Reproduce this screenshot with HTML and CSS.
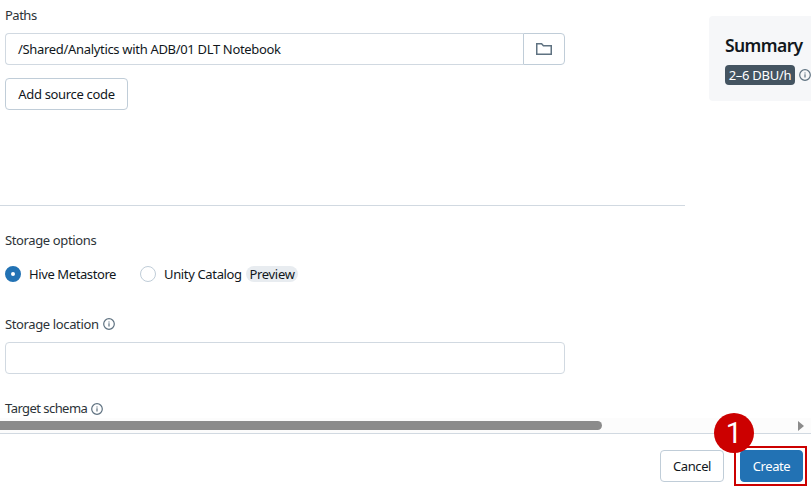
FILE: index.html
```html
<!DOCTYPE html>
<html lang="en">
<head>
<meta charset="utf-8">
<title>Create pipeline</title>
<link rel="stylesheet" href="styles.css">
</head>
<body>
<svg class="defs" width="0" height="0">
  <symbol id="info" viewBox="0 0 12 12"><circle cx="6" cy="6" r="5.3" fill="none" stroke="currentColor" stroke-width="1.2"/><path d="M6 5.2V8.6M6 3.4v1.2" stroke="currentColor" stroke-width="1.2"/></symbol>
</svg>
<div class="page">
  <main class="content">
    <form class="form">
      <section class="source">
        <div class="label paths-label"><span>Paths</span></div>
        <div class="path-row">
          <div class="path-input"><span class="path-text">/Shared/Analytics with ADB/01 DLT Notebook</span></div>
          <button class="browse" type="button" aria-label="Browse">
            <svg width="16" height="12" viewBox="0 0 16 12"><path d="M.75.75H5.6L7.4 2.75H15.25V11.25H.75Z" fill="none" stroke="#5f7281" stroke-width="1.5"/></svg>
          </button>
        </div>
        <button class="btn add" type="button"><span class="add-text">Add source code</span></button>
      </section>
      <section class="storage">
        <div class="label options"><span>Storage options</span></div>
        <div class="radios">
          <span class="radio checked"></span><span class="hive">Hive Metastore</span>
          <span class="radio second"></span><span class="unity">Unity Catalog</span>
          <span class="tag"><span>Preview</span></span>
        </div>
        <div class="label location"><span>Storage location</span><svg class="info"><use href="#info"/></svg></div>
        <div class="text-input"></div>
        <div class="label target"><span>Target schema</span><svg class="info"><use href="#info"/></svg></div>
      </section>
    </form>
    <aside class="summary">
      <h2><span>Summary</span></h2>
      <div class="rate"><span class="dbu"><span>2–6 DBU/h</span></span><svg class="info"><use href="#info"/></svg></div>
    </aside>
  </main>
  <div class="scrollbar"><div class="thumb"></div><svg width="6" height="10" viewBox="0 0 6 10"><path d="M0 0L6 5L0 10Z" fill="#8b8b8b"/></svg></div>
  <footer class="footer">
    <button class="btn cancel" type="button"><span>Cancel</span></button>
    <div class="highlight">
      <button class="btn create" type="button"><span>Create</span></button>
      <span class="step">1</span>
    </div>
  </footer>
</div>
</body>
</html>
```
FILE: styles.css
```css
* { box-sizing: border-box; }
body { margin: 0; background: #fff; color: #11171c; font: 13px/20px "Noto Sans", "Open Sans", sans-serif; overflow: hidden; }
button { font: inherit; color: inherit; padding: 0; }
span { white-space: nowrap; }
.defs { position: absolute; }
.page { width: 811px; height: 494px; display: flex; flex-direction: column; overflow: hidden; }
.content { height: 418px; display: flex; overflow: hidden; }
.form { width: 685px; flex: none; }
.source { height: 206px; padding: 5px 0 0 5px; border-bottom: 1px solid #d1d9e1; }
.label { height: 20px; display: flex; align-items: center; color: #2c3338; letter-spacing: -.37px; }
.paths-label { letter-spacing: -.5px; }
.path-row { width: 560px; height: 32px; margin-top: 8px; display: flex; }
.path-input { flex: 1; border: 1px solid #d1d9e1; border-right: 0; border-radius: 4px 0 0 4px; padding: 5px 12px; }
.path-text { letter-spacing: -.32px; }
.browse { width: 42px; border: 1px solid #c0cdd8; border-radius: 0 4px 4px 0; background: #fff; display: flex; align-items: center; justify-content: center; }
.btn { height: 32px; border: 1px solid #c0cdd8; border-radius: 4px; background: #fff; display: flex; align-items: center; justify-content: center; letter-spacing: -.4px; }
.add { width: 123px; margin-top: 13px; letter-spacing: -.32px; }
.storage { padding: 24px 0 0 5px; }
.radios { display: flex; align-items: center; height: 20px; margin-top: 14px; letter-spacing: -.3px; }
.radio { width: 16px; height: 16px; flex: none; border: 1px solid #c0cdd8; border-radius: 50%; margin-right: 8px; }
.checked { border: 6px solid #2272b4; }
.hive { width: 111px; letter-spacing: -.4px; }
.unity { width: 82px; letter-spacing: -.35px; }
.tag { width: 52px; height: 16px; border-radius: 8px; background: #e8ecf0; display: flex; align-items: center; justify-content: center; }
.location { margin-top: 30px; }
.info { width: 12px; height: 12px; margin-left: 4px; color: #5f7281; flex: none; }
.text-input { width: 560px; height: 32px; margin-top: 8px; border: 1px solid #d1d9e1; border-radius: 4px; }
.target { margin-top: 24px; letter-spacing: -.55px; }
.target .info { margin-top: 1px; }
.summary { width: 160px; height: 85px; flex: none; margin: 16px 0 0 24px; padding: 16px; background: #f6f7f9; border-radius: 4px; }
h2 { margin: 0; font-size: 17.5px; line-height: 26px; font-weight: 600; letter-spacing: -.6px; }
.rate { display: flex; align-items: center; margin-top: 7px; }
.dbu { width: 70px; height: 20px; border-radius: 4px; background: #445461; color: #fff; display: flex; align-items: center; justify-content: center; letter-spacing: -.28px; }
.scrollbar { height: 15px; background: #fcfcfc; display: flex; align-items: center; justify-content: space-between; padding-right: 7px; }
.thumb { width: 602px; height: 9px; background: #8b8b8b; border-radius: 0 5px 5px 0; }
.footer { height: 61px; border-top: 1px solid #d1d9e1; display: flex; justify-content: flex-end; align-items: flex-start; padding: 12px 4px 0 0; }
.cancel { width: 64px; margin: 4px 10px 0 0; }
.highlight { position: relative; width: 73px; height: 40px; border: 2px solid #c00; padding: 2px 2px 2px 4px; }
.create { width: 63px; background: #2272b4; border-color: #2272b4; color: #fff; }
.step { position: absolute; left: -22px; top: -35px; width: 40px; height: 40px; border-radius: 50%; background: #c00; color: #fff; font: 29px/41px Roboto, Arial, sans-serif; text-align: center; }
```
